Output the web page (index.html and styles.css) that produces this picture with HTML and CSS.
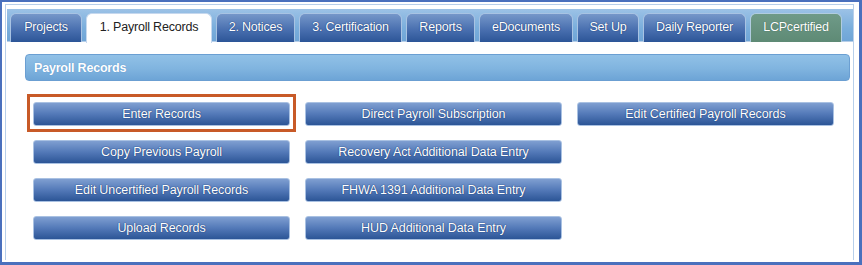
FILE: index.html
```html
<!DOCTYPE html>
<html>
<head>
    <title>Payroll Records</title>
    <link rel="stylesheet" href="styles.css">
</head>
<body>
    <div class="frame">
        <div class="inner">
            <div class="tabbar">
                <div class="tab w72">Projects</div>
                <div class="tab active w126">1. Payroll Records</div>
                <div class="tab w79">2. Notices</div>
                <div class="tab w103">3. Certification</div>
                <div class="tab w69">Reports</div>
                <div class="tab w94">eDocuments</div>
                <div class="tab w62">Set Up</div>
                <div class="tab w103">Daily Reporter</div>
                <div class="tab green w92">LCPcertified</div>
            </div>
            <div class="content">
                <div class="section-header">Payroll Records</div>
                <div class="button-grid">
                    <div class="cell">
                        <button class="btn">Enter Records</button>
                        <div class="highlight"></div>
                    </div>
                    <div class="cell"><button class="btn">Copy Previous Payroll</button></div>
                    <div class="cell"><button class="btn">Edit Uncertified Payroll Records</button></div>
                    <div class="cell"><button class="btn">Upload Records</button></div>
                    <div class="cell"><button class="btn">Direct Payroll Subscription</button></div>
                    <div class="cell"><button class="btn">Recovery Act Additional Data Entry</button></div>
                    <div class="cell"><button class="btn">FHWA 1391 Additional Data Entry</button></div>
                    <div class="cell"><button class="btn">HUD Additional Data Entry</button></div>
                    <div class="cell"><button class="btn">Edit Certified Payroll Records</button></div>
                </div>
            </div>
        </div>
    </div>
</body>
</html>
```

FILE: styles.css
```css
body {
  margin: 0;
  padding: 0;
  font-family: "Liberation Sans", Arial, sans-serif;
  background-color: #ffffff;
}

.frame {
  width: 862px;
  height: 265px;
  box-sizing: border-box;
  border-style: solid;
  border-color: #4a70bd;
  border-width: 2px 3px 3px 2px;
  padding: 2px 5px 2px 3px;
  background-color: #ffffff;
}

.inner {
  height: 100%;
  box-sizing: border-box;
  border: 1px solid #b8cfea;
  border-bottom: none;
  padding: 4px 0 0 1px;
}

.tabbar {
  display: flex;
  gap: 4px;
  height: 33px;
  box-sizing: border-box;
  padding: 4px 0 0 3px;
  background: linear-gradient(#9cc2e6, #7aaedc 60%, #6fa5d6);
  border-bottom: 1px solid #b5cde8;
}

.tab {
  flex-shrink: 0;
  height: 29px;
  box-sizing: border-box;
  line-height: 27px;
  text-align: center;
  white-space: nowrap;
  font-size: 12.5px;
  letter-spacing: -0.2px;
  color: #ffffff;
  text-shadow: 0 0 1px #1d3f7a, 0 0 1px #1d3f7a;
  background: linear-gradient(#7597c9, #4a70b0 55%, #2c5597);
  border: 1px solid #a8c3e3;
  border-bottom: none;
  border-radius: 6px 6px 0 0;
}

.w62 { width: 62px; }
.w69 { width: 69px; }
.w72 { width: 72px; }
.w79 { width: 79px; }
.w92 { width: 92px; }
.w94 { width: 94px; }
.w103 { width: 103px; }
.w126 { width: 126px; }

.tab.active {
  height: 30px;
  color: #222222;
  text-shadow: none;
  background: #ffffff;
  border-color: #c6d8ee;
}

.tab.green {
  background: linear-gradient(#6f9a88, #5e8a75);
  border-color: #b1cce0;
  text-shadow: 0 0 1px #2f5444;
}

.content {
  padding: 12px 3px 0 18px;
}

.section-header {
  height: 27px;
  box-sizing: border-box;
  padding-left: 8px;
  line-height: 27px;
  font-size: 12.5px;
  letter-spacing: -0.2px;
  font-weight: bold;
  color: #ffffff;
  text-shadow: 0 0 1px #4f86c0;
  background: linear-gradient(#91c1e7, #80b4df 55%, #6da4d6);
  border: 1px solid #6b9fd2;
  border-radius: 4px;
}

.button-grid {
  display: grid;
  grid-template-columns: repeat(3, 257px);
  grid-template-rows: repeat(4, 24px);
  grid-auto-flow: column;
  column-gap: 15px;
  row-gap: 14px;
  padding: 21px 0 0 8px;
}

.cell {
  position: relative;
}

.btn {
  width: 100%;
  height: 24px;
  padding: 0;
  font-family: "Liberation Sans", Arial, sans-serif;
  font-size: 12.5px;
  letter-spacing: -0.1px;
  color: #ffffff;
  text-shadow: 0 0 1px #1d3f7a, 0 0 1px #1d3f7a;
  background: linear-gradient(#7f9fd1, #5379b8 50%, #2c5596);
  border: 1px solid #a9c1e2;
  border-radius: 3px;
  cursor: pointer;
}

.highlight {
  position: absolute;
  top: -8px;
  left: -6px;
  right: -6px;
  bottom: -6px;
  border: 3px solid #c85a28;
}
```
